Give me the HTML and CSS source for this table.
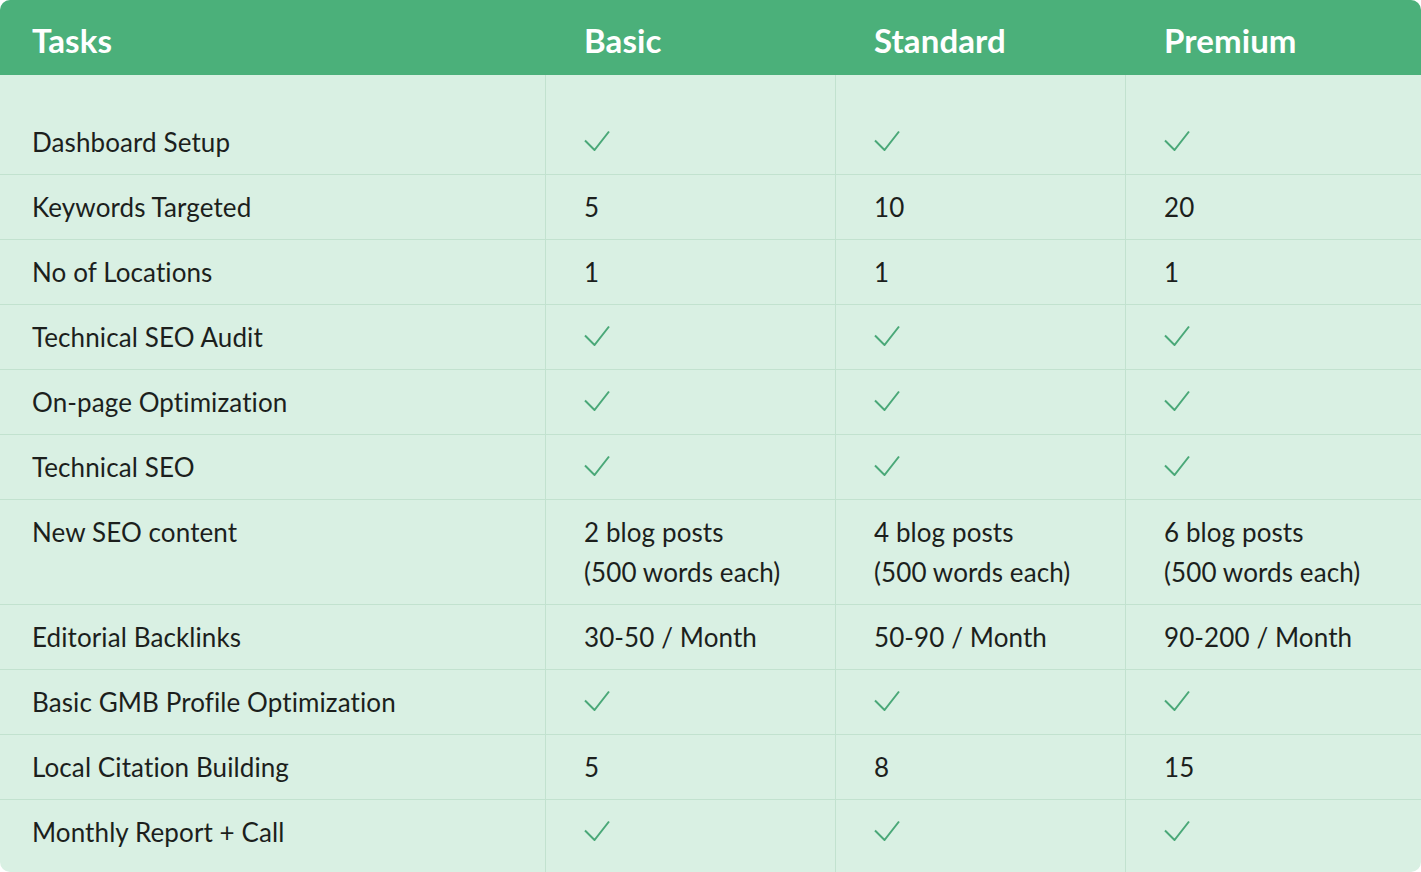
FILE: index.html
```html
<!DOCTYPE html>
<html>
<head>
<meta charset="utf-8">
<link rel="stylesheet" href="styles.css">
</head>
<body>
<div class="table">
  <div class="row head">
    <div class="cell">Tasks</div>
    <div class="cell">Basic</div>
    <div class="cell">Standard</div>
    <div class="cell">Premium</div>
  </div>
  <div class="row first">
    <div class="cell">Dashboard Setup</div>
    <div class="cell"><svg class="chk" viewBox="0 0 26 21"><path d="M1 10.5 L10.5 20 L25 1.5"/></svg></div>
    <div class="cell"><svg class="chk" viewBox="0 0 26 21"><path d="M1 10.5 L10.5 20 L25 1.5"/></svg></div>
    <div class="cell"><svg class="chk" viewBox="0 0 26 21"><path d="M1 10.5 L10.5 20 L25 1.5"/></svg></div>
  </div>
  <div class="row">
    <div class="cell">Keywords Targeted</div>
    <div class="cell">5</div>
    <div class="cell">10</div>
    <div class="cell">20</div>
  </div>
  <div class="row">
    <div class="cell">No of Locations</div>
    <div class="cell">1</div>
    <div class="cell">1</div>
    <div class="cell">1</div>
  </div>
  <div class="row">
    <div class="cell">Technical SEO Audit</div>
    <div class="cell"><svg class="chk" viewBox="0 0 26 21"><path d="M1 10.5 L10.5 20 L25 1.5"/></svg></div>
    <div class="cell"><svg class="chk" viewBox="0 0 26 21"><path d="M1 10.5 L10.5 20 L25 1.5"/></svg></div>
    <div class="cell"><svg class="chk" viewBox="0 0 26 21"><path d="M1 10.5 L10.5 20 L25 1.5"/></svg></div>
  </div>
  <div class="row">
    <div class="cell">On-page Optimization</div>
    <div class="cell"><svg class="chk" viewBox="0 0 26 21"><path d="M1 10.5 L10.5 20 L25 1.5"/></svg></div>
    <div class="cell"><svg class="chk" viewBox="0 0 26 21"><path d="M1 10.5 L10.5 20 L25 1.5"/></svg></div>
    <div class="cell"><svg class="chk" viewBox="0 0 26 21"><path d="M1 10.5 L10.5 20 L25 1.5"/></svg></div>
  </div>
  <div class="row">
    <div class="cell">Technical SEO</div>
    <div class="cell"><svg class="chk" viewBox="0 0 26 21"><path d="M1 10.5 L10.5 20 L25 1.5"/></svg></div>
    <div class="cell"><svg class="chk" viewBox="0 0 26 21"><path d="M1 10.5 L10.5 20 L25 1.5"/></svg></div>
    <div class="cell"><svg class="chk" viewBox="0 0 26 21"><path d="M1 10.5 L10.5 20 L25 1.5"/></svg></div>
  </div>
  <div class="row">
    <div class="cell">New SEO content</div>
    <div class="cell">2 blog posts<br>(500 words each)</div>
    <div class="cell">4 blog posts<br>(500 words each)</div>
    <div class="cell">6 blog posts<br>(500 words each)</div>
  </div>
  <div class="row">
    <div class="cell">Editorial Backlinks</div>
    <div class="cell">30-50 / Month</div>
    <div class="cell">50-90 / Month</div>
    <div class="cell">90-200 / Month</div>
  </div>
  <div class="row">
    <div class="cell">Basic GMB Profile Optimization</div>
    <div class="cell"><svg class="chk" viewBox="0 0 26 21"><path d="M1 10.5 L10.5 20 L25 1.5"/></svg></div>
    <div class="cell"><svg class="chk" viewBox="0 0 26 21"><path d="M1 10.5 L10.5 20 L25 1.5"/></svg></div>
    <div class="cell"><svg class="chk" viewBox="0 0 26 21"><path d="M1 10.5 L10.5 20 L25 1.5"/></svg></div>
  </div>
  <div class="row">
    <div class="cell">Local Citation Building</div>
    <div class="cell">5</div>
    <div class="cell">8</div>
    <div class="cell">15</div>
  </div>
  <div class="row last">
    <div class="cell">Monthly Report + Call</div>
    <div class="cell"><svg class="chk" viewBox="0 0 26 21"><path d="M1 10.5 L10.5 20 L25 1.5"/></svg></div>
    <div class="cell"><svg class="chk" viewBox="0 0 26 21"><path d="M1 10.5 L10.5 20 L25 1.5"/></svg></div>
    <div class="cell"><svg class="chk" viewBox="0 0 26 21"><path d="M1 10.5 L10.5 20 L25 1.5"/></svg></div>
  </div>
</div>
</body>
</html>
```
FILE: styles.css
```css
* { box-sizing: border-box; }
html, body { margin: 0; padding: 0; background: #ffffff; }
body {
  font-family: Lato, "Open Sans", sans-serif;
  color: #1c1f1d;
  width: 1421px;
  height: 872px;
  overflow: hidden;
}
.table {
  width: 1421px;
  height: 872px;
  background: #d9f0e3;
  border-radius: 10px;
  overflow: hidden;
}
.row {
  display: grid;
  grid-template-columns: 545px 290px 290px 1fr;
  border-bottom: 1px solid #c2e2cf;
}
.row .cell {
  font-size: 26px;
  letter-spacing: 0.1px;
  line-height: 40px;
  padding: 12px 0 12px 38px;
  min-height: 64px;
}
.row .cell:first-child { padding-left: 32px; }
.row .cell + .cell { border-left: 1px solid #c2e2cf; }
.row.head {
  background: #4bb07a;
  height: 75px;
  border-bottom: none;
}
.row.head .cell {
  color: #ffffff;
  font-size: 33px;
  font-weight: 700;
  line-height: 75px;
  padding-top: 3px;
  padding-bottom: 0;
  padding-left: 39px;
  border-left: none;
}
.row.head .cell:first-child { padding-left: 32px; }
.row.first .cell { padding-top: 47px; }
.row.last { border-bottom: none; }
.row.last .cell { padding-bottom: 20px; }
.chk {
  display: block;
  width: 26px;
  height: 21px;
  margin-top: 8px;
  margin-left: 0;
  fill: none;
  stroke: #4aa878;
  stroke-width: 2;
}
```
